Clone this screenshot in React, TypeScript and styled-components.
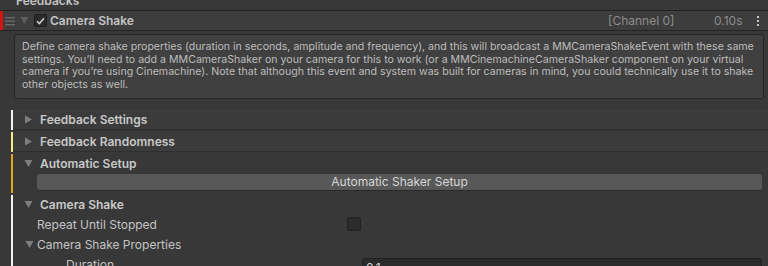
import React from "react";
import styled, { createGlobalStyle } from "styled-components";

const GlobalStyle = createGlobalStyle`
  html, body {
    margin: 0;
    padding: 0;
    background: #383838;
    overflow: hidden;
  }
  body {
    font-family: Inter, "Noto Sans", "Liberation Sans", sans-serif;
    color: #c4c4c4;
  }
`;

const Page = styled.div`
  width: 768px;
  height: 266px;
  overflow: hidden;
  display: flex;
  flex-direction: column;
  background: #383838;
  & > * {
    flex: none;
  }
`;

const TopTitle = styled.div`
  height: 10px;
  overflow: hidden;
  padding-left: 16px;
  font-size: 12px;
  font-weight: 600;
  line-height: 12px;
  & > span {
    display: block;
    margin-top: -5px;
  }
`;

const HeaderRow = styled.div`
  height: 19px;
  display: flex;
  align-items: center;
  background: #3d3d3d;
  border-top: 1px solid #242424;
  border-bottom: 1px solid #242424;
  padding-right: 8px;
`;

const RedMark = styled.div`
  width: 3px;
  align-self: stretch;
  background: #d41414;
`;

const Grip = styled.svg`
  margin-left: 2px;
  width: 11px;
  height: 10px;
`;

const Caret = styled.svg<{ $ml: number }>`
  margin-left: ${(p) => p.$ml}px;
  width: 9px;
  height: 9px;
  flex: none;
`;

const Check = styled.div`
  margin-left: 5px;
  width: 11px;
  height: 11px;
  background: #2a2a2a;
  border: 1px solid #1e1e1e;
  border-radius: 2px;
  display: flex;
  align-items: center;
  justify-content: center;
`;

const HeaderTitle = styled.span`
  margin-left: 3px;
  font-size: 12px;
  font-weight: 600;
  color: #c4c4c4;
  flex: 1;
`;

const Muted = styled.span<{ $w: number }>`
  width: ${(p) => p.$w}px;
  font-size: 12px;
  color: #8c8c8c;
`;

const Kebab = styled.svg`
  margin-left: 6px;
  width: 4px;
  height: 12px;
`;

const HelpBox = styled.div`
  margin: 3px 4px 0 14px;
  height: 51px;
  padding: 6px 7px 6px 7px;
  background: #404040;
  border: 1px solid #252525;
  border-radius: 3px;
  font-size: 10.6px;
  line-height: 12.5px;
  color: #bdbdbd;
  & > span {
    display: block;
    white-space: nowrap;
  }
`;

const Sections = styled.div`
  margin-top: 11px;
  display: flex;
  flex-direction: column;
  gap: 2px;
`;

const Section = styled.div`
  display: flex;
  padding-left: 11px;
`;

const Bar = styled.div<{ $color: string }>`
  width: 2px;
  flex: none;
  background: ${(p) => p.$color};
`;

const SectionBody = styled.div`
  flex: 1;
  display: flex;
  flex-direction: column;
  & > * {
    flex: none;
  }
`;

const FoldRow = styled.div<{ $shade?: boolean }>`
  height: 19px;
  display: flex;
  align-items: center;
  background: ${(p) => (p.$shade ? "#3b3b3b" : "transparent")};
  border-bottom: ${(p) => (p.$shade ? "1px solid #2e2e2e" : "none")};
`;

const FoldTitle = styled.span`
  margin-left: 7px;
  font-size: 12px;
  font-weight: 600;
  color: #c8c8c8;
`;

const ActionButton = styled.div`
  margin: 1px 6px 2px 24px;
  height: 16px;
  background: #585858;
  border-bottom: 1px solid #2a2a2a;
  border-radius: 3px;
  font-size: 12px;
  line-height: 16px;
  text-align: center;
  color: #d6d6d6;
`;

const FieldRow = styled.div`
  height: 20px;
  display: flex;
  align-items: center;
  padding-right: 6px;
`;

const FieldLabel = styled.span<{ $indent: number; $w: number }>`
  margin-left: ${(p) => p.$indent}px;
  width: ${(p) => p.$w}px;
  flex: none;
  font-size: 12px;
  color: #c4c4c4;
  display: flex;
  align-items: center;
  gap: 3px;
`;

const BoxCheck = styled.div`
  width: 12px;
  height: 12px;
  background: #2b2b2b;
  border: 1px solid #232323;
  border-radius: 2px;
`;

const TextField = styled.div`
  flex: 1;
  height: 17px;
  margin-top: 6px;
  background: #2a2a2a;
  border: 1px solid #212121;
  border-radius: 3px;
  font-size: 12px;
  line-height: 17px;
  padding-left: 3px;
  color: #d2d2d2;
`;

const RightTri = () => (
  <Caret $ml={11} viewBox="0 0 9 9">
    <path d="M1 0.5 L8 4.5 L1 8.5 Z" fill="#7e7e7e" />
  </Caret>
);

const DownTri = ({ ml = 11, c = "#7e7e7e" }: { ml?: number; c?: string }) => (
  <Caret $ml={ml} viewBox="0 0 9 9">
    <path d="M0.5 1 L8.5 1 L4.5 8 Z" fill={c} />
  </Caret>
);

export default function App() {
  return (
    <>
      <GlobalStyle />
      <Page>
        <TopTitle>
          <span>Feedbacks</span>
        </TopTitle>
        <HeaderRow>
          <RedMark />
          <Grip viewBox="0 0 11 10">
            <rect x="0" y="1" width="10" height="1.4" fill="#6a6a6a" />
            <rect x="0" y="4.5" width="10" height="1.4" fill="#6a6a6a" />
            <rect x="0" y="8" width="10" height="1.4" fill="#6a6a6a" />
          </Grip>
          <DownTri ml={4} c="#5d5d5d" />
          <Check>
            <svg width="9" height="8" viewBox="0 0 9 8">
              <path d="M1 4.2 L3.4 6.6 L8 1.2" stroke="#d0d0d0" strokeWidth="1.5" fill="none" />
            </svg>
          </Check>
          <HeaderTitle>Camera Shake</HeaderTitle>
          <Muted $w={106}>[Channel 0]</Muted>
          <Muted $w={36}>0.10s</Muted>
          <Kebab viewBox="0 0 4 12">
            <rect x="1" y="1" width="2" height="2" fill="#c4c4c4" />
            <rect x="1" y="5" width="2" height="2" fill="#c4c4c4" />
            <rect x="1" y="9" width="2" height="2" fill="#c4c4c4" />
          </Kebab>
        </HeaderRow>
        <HelpBox>
          <span>
            Define camera shake properties (duration in seconds, amplitude and frequency), and this will broadcast a MMCameraShakeEvent with these same
          </span>
          <span>
            settings. You’ll need to add a MMCameraShaker on your camera for this to work (or a MMCinemachineCameraShaker component on your virtual
          </span>
          <span>
            camera if you’re using Cinemachine). Note that although this event and system was built for cameras in mind, you could technically use it to shake
          </span>
          <span>other objects as well.</span>
        </HelpBox>
        <Sections>
          <Section>
            <Bar $color="#f2f2f2" />
            <SectionBody>
              <FoldRow $shade>
                <RightTri />
                <FoldTitle>Feedback Settings</FoldTitle>
              </FoldRow>
            </SectionBody>
          </Section>
          <Section>
            <Bar $color="#f5e98c" />
            <SectionBody>
              <FoldRow $shade>
                <RightTri />
                <FoldTitle>Feedback Randomness</FoldTitle>
              </FoldRow>
            </SectionBody>
          </Section>
          <Section>
            <Bar $color="#e3a51c" />
            <SectionBody>
              <FoldRow>
                <DownTri />
                <FoldTitle>Automatic Setup</FoldTitle>
              </FoldRow>
              <ActionButton>Automatic Shaker Setup</ActionButton>
            </SectionBody>
          </Section>
          <Section>
            <Bar $color="#f2f2f2" />
            <SectionBody>
              <FoldRow>
                <DownTri />
                <FoldTitle>Camera Shake</FoldTitle>
              </FoldRow>
              <FieldRow>
                <FieldLabel $indent={24} $w={310}>
                  Repeat Until Stopped
                </FieldLabel>
                <BoxCheck />
              </FieldRow>
              <FieldRow>
                <FieldLabel $indent={12} $w={322}>
                  <Caret $ml={0} viewBox="0 0 9 9">
                    <path d="M0.5 1 L8.5 1 L4.5 8 Z" fill="#7e7e7e" />
                  </Caret>
                  Camera Shake Properties
                </FieldLabel>
              </FieldRow>
              <FieldRow>
                <FieldLabel $indent={53} $w={296}>
                  Duration
                </FieldLabel>
                <TextField>0.1</TextField>
              </FieldRow>
            </SectionBody>
          </Section>
        </Sections>
      </Page>
    </>
  );
}
